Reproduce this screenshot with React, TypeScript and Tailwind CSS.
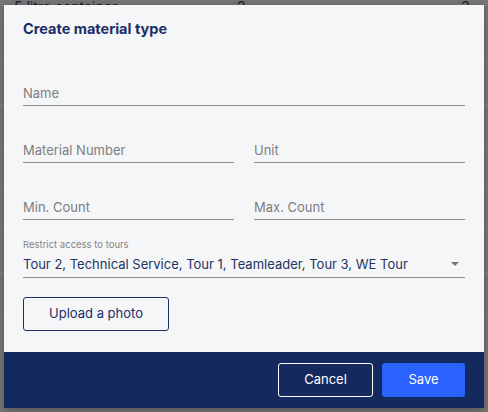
const BG_ROWS = Array.from({ length: 10 })

function Field({ label, className = '' }: { label: string; className?: string }) {
  return (
    <div className={`border-b border-[#8c8c8c] pb-[2px] ${className}`}>
      <span className="block h-5 text-[13px] leading-5 text-[#7d7d7d]">{label}</span>
    </div>
  )
}

export default function App() {
  return (
    <div
      className="relative h-[412px] w-[488px] overflow-hidden bg-[#767676]"
      style={{ fontFamily: 'Inter, "Noto Sans", sans-serif' }}
    >
      {/* table behind the overlay */}
      <div className="flex h-5 items-end justify-between pl-[14px] pr-[18px] text-[14px] leading-[26px] text-[#1c1c1c]">
        <span className="w-[223px]">5 litre container</span>
        <span className="flex-1">2</span>
        <span>3</span>
      </div>
      {BG_ROWS.map((_, i) => (
        <div key={i} className="h-[42px] border-t border-[#838383]" />
      ))}

      {/* modal */}
      <div className="absolute left-[4px] top-[5px] flex h-[403px] w-[480px] flex-col bg-[#f5f6f8] shadow-[0_2px_8px_rgba(0,0,0,0.3)]">
        <div className="flex-1 px-[19px] pt-[14px]">
          <h2 className="h-5 text-[14.5px] font-bold leading-5 text-[#1b2f66]">Create material type</h2>

          <Field label="Name" className="mt-[44px]" />

          <div className="mt-[34px] grid grid-cols-2 gap-5">
            <Field label="Material Number" />
            <Field label="Unit" />
          </div>

          <div className="mt-[34px] grid grid-cols-2 gap-5">
            <Field label="Min. Count" />
            <Field label="Max. Count" />
          </div>

          <div className="mt-[19px] border-b border-[#8c8c8c] pb-[3px]">
            <span className="block h-3 text-[9.5px] leading-3 text-[#858585]">Restrict access to tours</span>
            <div className="mt-[3px] flex h-5 items-center justify-between">
              <span className="text-[13px] leading-5 text-[#22345f]">
                Tour 2, Technical Service, Tour 1, Teamleader, Tour 3, WE Tour
              </span>
              <svg width="8" height="4" viewBox="0 0 8 4" className="mr-[6px]">
                <path d="M0 0h8L4 4z" fill="#767676" />
              </svg>
            </div>
          </div>

          <button
            type="button"
            className="mt-[19px] h-[34px] w-[146px] rounded-[3px] border border-[#1b2f66] text-[13px] text-[#1b2f66]"
          >
            Upload a photo
          </button>
        </div>

        <div className="flex h-[56px] items-start justify-end gap-[9px] bg-[#142a5f] pr-[19px] pt-[11px]">
          <button
            type="button"
            className="h-[34px] w-[95px] rounded-[3px] border border-white text-[13px] text-white"
          >
            Cancel
          </button>
          <button type="button" className="h-[34px] w-[83px] rounded-[3px] bg-[#2962fe] text-[13px] text-white">
            Save
          </button>
        </div>
      </div>
    </div>
  )
}
